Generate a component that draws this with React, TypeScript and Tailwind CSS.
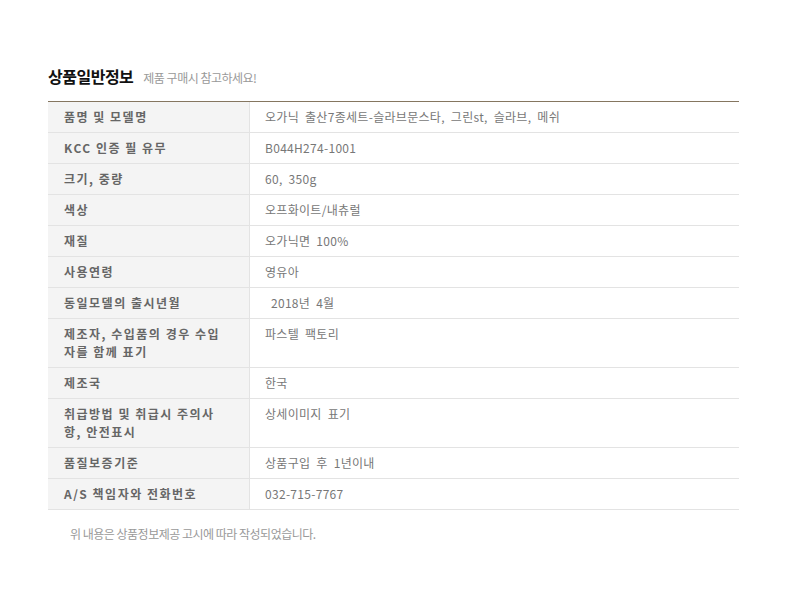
import React from "react";

const rows: [string, string][] = [
  ["품명 및 모델명", "오가닉 출산7종세트-슬라브문스타, 그린st, 슬라브, 메쉬"],
  ["KCC 인증 필 유무", "B044H274-1001"],
  ["크기, 중량", "60, 350g"],
  ["색상", "오프화이트/내츄럴"],
  ["재질", "오가닉면 100%"],
  ["사용연령", "영유아"],
  ["동일모델의 출시년월", "\u00a02018년 4월"],
  ["제조자, 수입품의 경우 수입자를 함께 표기", "파스텔 팩토리"],
  ["제조국", "한국"],
  ["취급방법 및 취급시 주의사항, 안전표시", "상세이미지 표기"],
  ["품질보증기준", "상품구입 후 1년이내"],
  ["A/S 책임자와 전화번호", "032-715-7767"],
];

export default function App() {
  return (
    <div
      className="w-[800px] h-[592px] bg-white pl-[48px] pt-[64px]"
      style={{ fontFamily: '"Noto Sans CJK KR", "Noto Sans", sans-serif' }}
    >
      <div className="flex items-baseline gap-[10px] h-[24px]">
        <span className="text-[16px] font-bold text-[#111] leading-[24px] tracking-[-0.5px]">상품일반정보</span>
        <span className="text-[12px] text-[#999] leading-[24px] tracking-[-0.5px]">제품 구매시 참고하세요!</span>
      </div>
      <div className="mt-[13px] w-[691px] border-t border-[#857660]">
        {rows.map(([k, v], i) => (
          <div key={i} className="flex border-b border-[#e3e3e3]">
            <div className="w-[202px] shrink-0 bg-[#f4f4f4] border-r border-[#e3e3e3] pl-[16px] pr-[20px] py-[6px] text-[12px] leading-[18px] font-bold text-[#666] tracking-[1.5px] break-all">
              {k}
            </div>
            <div className="flex-1 pl-[15px] pr-[10px] pt-[6px] pb-[6px] text-[12px] leading-[18px] text-[#777] tracking-[0.3px] [word-spacing:3px]">
              {v}
            </div>
          </div>
        ))}
      </div>
      <div className="mt-[15px] pl-[22px] text-[12px] leading-[18px] text-[#999] tracking-[-0.5px]">
        위 내용은 상품정보제공 고시에 따라 작성되었습니다.
      </div>
    </div>
  );
}
